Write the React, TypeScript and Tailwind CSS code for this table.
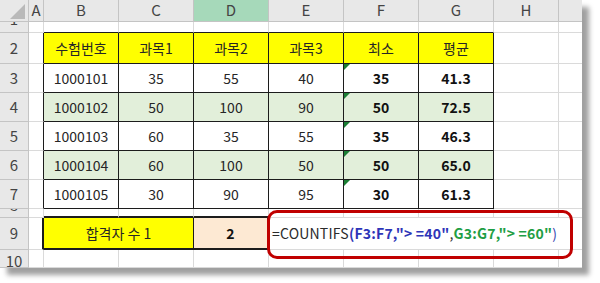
import type { ReactNode } from "react";

const COLS = ["A", "B", "C", "D", "E", "F", "G", "H", ""];

const TABLE = [
  ["수험번호", "과목1", "과목2", "과목3", "최소", "평균"],
  ["1000101", "35", "55", "40", "35", "41.3"],
  ["1000102", "50", "100", "90", "50", "72.5"],
  ["1000103", "60", "35", "55", "35", "46.3"],
  ["1000104", "60", "100", "50", "50", "65.0"],
  ["1000105", "30", "90", "95", "30", "61.3"],
];

const GRID = "border-r border-b border-[#dadada]";
const LINE = "border-[#1c1c1c]";

function Formula() {
  return (
    <span className="whitespace-nowrap tracking-[0.2px]">
      <span className="text-[#2b2b2b]">=COUNTIFS</span>
      <span className="font-bold text-[#2e35b8]">(F3:F7,"&gt; =40"</span>
      <span className="text-[#2b2b2b]">,</span>
      <span className="font-semibold text-[#1f9e45]">G3:G7,"&gt; =60"</span>
      <span className="text-[#3b47b0]">)</span>
    </span>
  );
}

function bodyCell(r: number, ci: number): ReactNode {
  const key = `${r}-${ci}`;

  // data table B2:G7
  if (r >= 2 && r <= 7 && ci >= 1 && ci <= 6) {
    const text = TABLE[r - 2][ci - 1];
    const bg = r === 2 ? "bg-[#ffff00]" : r === 4 || r === 6 ? "bg-[#e2efda]" : "bg-white";
    const bold = r >= 3 && ci >= 5;
    return (
      <div
        key={key}
        className={`relative flex items-center justify-center border-r border-b ${LINE} ${bg} ${
          bold ? "font-bold text-[#111]" : "text-[#262626]"
        }`}
      >
        {r >= 3 && ci === 5 ? (
          <span className="absolute left-0 top-0 h-0 w-0 border-t-[6px] border-r-[6px] border-t-[#1b7f35] border-r-transparent" />
        ) : null}
        {text}
      </div>
    );
  }

  if (ci === 0 && r >= 2 && r <= 7) {
    return <div key={key} className={`border-r ${LINE} border-b border-b-[#dadada] bg-white`} />;
  }
  if (r === 1 && ci >= 1 && ci <= 6) {
    return <div key={key} className={`border-b ${LINE} border-r border-r-[#dadada] bg-white`} />;
  }
  if (r === 8 && ci >= 1 && ci <= 3) {
    return <div key={key} className={`border-b-2 ${LINE} border-r border-r-[#dadada] bg-white`} />;
  }

  if (r === 9) {
    if (ci === 0) {
      return <div key={key} className={`border-r-2 ${LINE} border-b border-b-[#dadada] bg-white`} />;
    }
    if (ci === 1) {
      return (
        <div
          key={key}
          className={`col-span-2 flex items-center justify-center border-r border-b-2 ${LINE} bg-[#ffff00] text-[#262626]`}
        >
          합격자 수 1
        </div>
      );
    }
    if (ci === 3) {
      return (
        <div
          key={key}
          className={`flex items-center justify-center border-r-2 border-b-2 ${LINE} bg-[#fde9d3] font-bold text-[#111]`}
        >
          2
        </div>
      );
    }
    if (ci === 4) {
      return (
        <div key={key} className="col-span-5 flex items-center border-b border-[#dadada] bg-white pl-[3px]">
          <Formula />
        </div>
      );
    }
    return null;
  }

  return <div key={key} className={`${GRID} bg-white`} />;
}

export default function App() {
  const rows = Array.from({ length: 10 }, (_, i) => i + 1);

  return (
    <div className="relative h-[283px] w-[600px] bg-white font-['Noto_Sans_CJK_KR',sans-serif] text-[14px]">
      <div className="grid h-[268px] w-[582px] grid-cols-[29px_15px_75px_75px_75px_75px_75px_75px_65px_24px] grid-rows-[22px_11px_31px_29px_29px_29px_29px_29px_9px_32px_18px] overflow-hidden bg-white shadow-[7px_7px_5px_#a0a0a0]">
        {/* corner */}
        <div className="flex items-end justify-end border-r border-b border-[#c4c4c4] bg-[#e8e8e8] pr-[3px] pb-[2px]">
          <svg width="15" height="15" viewBox="0 0 15 15">
            <polygon points="15,0 15,15 0,15" fill="#b9b9b9" />
          </svg>
        </div>
        {COLS.map((c, i) => (
          <div
            key={`h-${i}`}
            className={`flex items-center justify-center border-r border-b border-[#c4c4c4] text-[15px] text-[#444] ${
              c === "D" ? "bg-[#a6d9ba]" : "bg-[#e8e8e8]"
            }`}
          >
            {c}
          </div>
        ))}
        {rows.map((r) => [
          <div
            key={`rh-${r}`}
            className="flex items-center justify-center overflow-hidden border-r border-b border-[#c4c4c4] bg-[#e8e8e8] text-[15px] text-[#444]"
          >
            <span className={r === 1 || r === 8 ? "-mt-[16px]" : r === 10 ? "mt-[6px]" : ""}>{r}</span>
          </div>,
          ...COLS.map((_, ci) => bodyCell(r, ci)),
        ])}
      </div>

      {/* highlight around the formula */}
      <div className="pointer-events-none absolute left-[267px] top-[210px] h-[49px] w-[306px] rounded-[10px] border-[3px] border-[#c00000]" />
    </div>
  );
}
